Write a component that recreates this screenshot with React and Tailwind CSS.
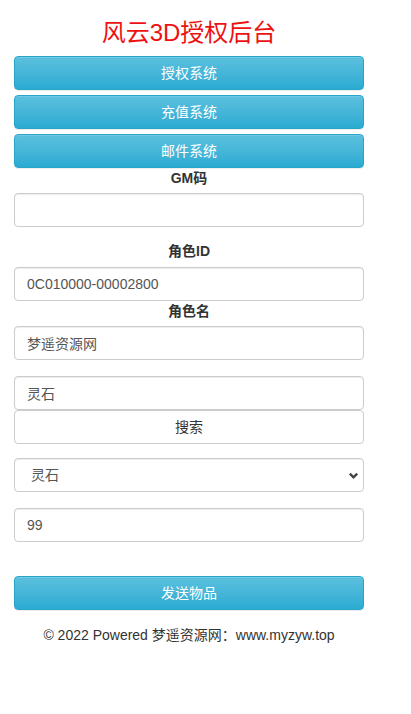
import React from 'react';

const FONT = { fontFamily: '"Liberation Sans", "Noto Sans CJK SC", sans-serif' };

function InfoButton({ children, className = '' }) {
  return (
    <button
      className={`block w-full h-[34px] rounded-[4px] border border-[#28a4c9] bg-gradient-to-b from-[#5bc0de] to-[#2aabd2] text-white text-[14px] leading-[20px] shadow-[inset_0_1px_0_rgba(255,255,255,0.15),0_1px_1px_rgba(0,0,0,0.075)] ${className}`}
    >
      {children}
    </button>
  );
}

function Field({ value, placeholder, className = '' }) {
  return (
    <input
      defaultValue={value}
      placeholder={placeholder}
      className={`block w-full h-[34px] px-[12px] rounded-[4px] border border-[#ccc] bg-white text-[14px] text-[#555] shadow-[inset_0_1px_1px_rgba(0,0,0,0.075)] outline-none ${className}`}
    />
  );
}

function Label({ children }) {
  return <div className="h-[20px] leading-[20px] text-center text-[14px] font-bold text-[#333]">{children}</div>;
}

export default function App() {
  return (
    <div className="w-[411px] min-h-[714px] bg-white" style={FONT}>
      <div className="ml-[14px] w-[350px] pt-[19px]">
        {/* title */}
        <h1 className="h-[28px] leading-[28px] text-center text-[24px] text-[#ee1111] mb-[9px]">风云3D授权后台</h1>

        {/* nav buttons */}
        <div className="flex flex-col gap-[5px]">
          <InfoButton>授权系统</InfoButton>
          <InfoButton>充值系统</InfoButton>
          <InfoButton>邮件系统</InfoButton>
        </div>

        {/* GM code */}
        <div>
          <Label>GM码</Label>
          <Field className="mt-[5px]" />
        </div>

        <div className="mt-[14px]">
          <Label>角色ID</Label>
          <Field className="mt-[6px]" value="0C010000-00002800" />
        </div>

        <div>
          <Label>角色名</Label>
          <Field className="mt-[5px]" value="梦遥资源网" />
        </div>

        <div className="mt-[16px]">
          <Field value="灵石" />
          <button className="block w-full h-[34px] rounded-[4px] border border-[#ccc] bg-white text-[14px] text-[#333]">
            搜索
          </button>
        </div>

        <div className="mt-[14px] relative">
          <select className="block w-full h-[34px] pl-[12px] pr-[30px] rounded-[4px] border border-[#ccc] bg-white text-[14px] text-[#555] appearance-none outline-none shadow-[inset_0_1px_1px_rgba(0,0,0,0.075)]">
            <option>&nbsp;灵石</option>
          </select>
          <svg className="absolute right-[5px] top-[12px] w-[11px] h-[11px] pointer-events-none" viewBox="0 0 12 12">
            <path d="M2 4l4 4 4-4" fill="none" stroke="#444" strokeWidth="2.6" />
          </svg>
        </div>

        <Field className="mt-[16px]" value="99" />

        <InfoButton className="mt-[34px]">发送物品</InfoButton>

        <p className="mt-[15px] text-center text-[14px] leading-[20px] text-[#333]">
          © 2022 Powered 梦遥资源网：www.myzyw.top
        </p>
      </div>
    </div>
  );
}
